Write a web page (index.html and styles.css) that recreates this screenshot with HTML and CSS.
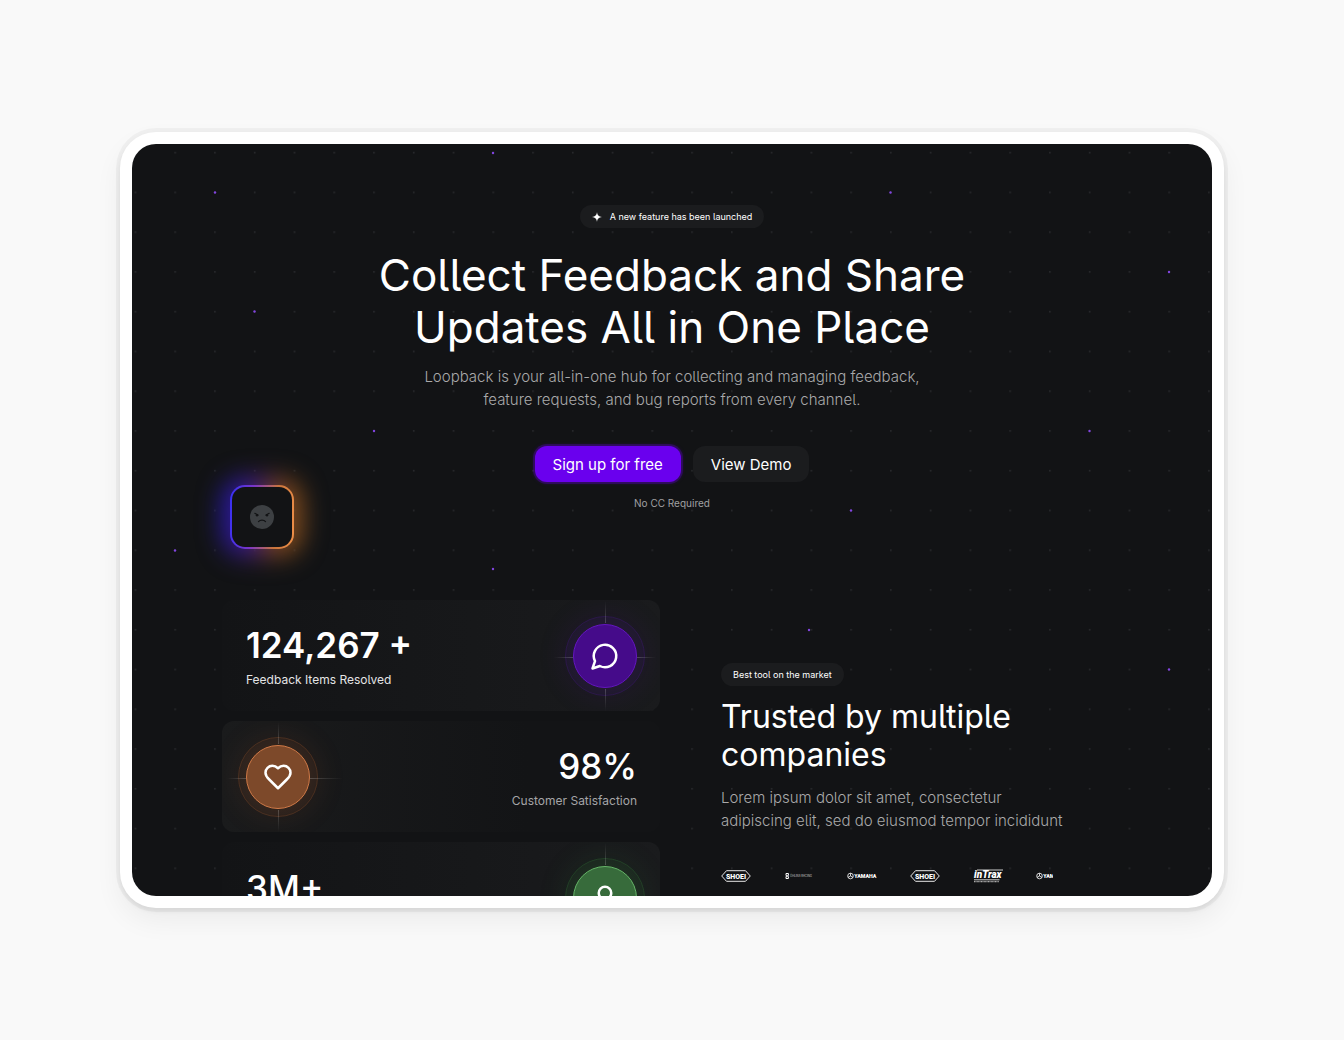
FILE: index.html
```html
<!DOCTYPE html>
<html lang="en">
<head>
<meta charset="utf-8">
<meta name="viewport" content="width=device-width, initial-scale=1">
<title>Loopback</title>
<link rel="stylesheet" href="styles.css">
</head>
<body>
<div class="frame">
<main class="screen">
  <svg class="dots" aria-hidden="true">
    <defs>
      <pattern id="grid" x="2.6" y="7.8" width="39.76" height="39.76" patternUnits="userSpaceOnUse">
        <rect width="1.6" height="1.6" fill="#292a2d"/>
      </pattern>
    </defs>
    <rect width="100%" height="100%" fill="url(#grid)"/>
    <g fill="#8245e0">
      <circle cx="361" cy="9" r="1.2"/><circle cx="83" cy="48.500" r="1.200"/><circle cx="758.500" cy="48.500" r="1.200"/>
      <circle cx="1037" cy="128" r="1.200"/><circle cx="122.500" cy="167.500" r="1.200"/><circle cx="242" cy="287" r="1.200"/>
      <circle cx="957.500" cy="287" r="1.200"/><circle cx="719" cy="366.500" r="1.200"/><circle cx="43" cy="406.500" r="1.200"/>
      <circle cx="361" cy="425" r="1.200"/><circle cx="677" cy="486" r="1.200"/><circle cx="1037" cy="525.500" r="1.200"/>
    </g>
  </svg>

  <section class="hero">
    <p class="pill">
      <svg class="spark" viewBox="0 0 10 10" aria-hidden="true"><path d="M5 0C5.400 3.300 6.700 4.600 10 5 6.700 5.400 5.400 6.700 5 10 4.600 6.700 3.300 5.400 0 5 3.300 4.600 4.600 3.300 5 0Z" fill="#fff"/></svg>
      A new feature has been launched
    </p>
    <h1 class="hero-title">Collect Feedback and Share<br>Updates All in One Place</h1>
    <p class="lead">Loopback is your all-in-one hub for collecting and managing feedback,<br>feature requests, and bug reports from every channel.</p>
    <div class="actions">
      <button class="btn btn-primary" type="button">Sign up for free</button>
      <button class="btn btn-ghost" type="button">View Demo</button>
    </div>
    <p class="note">No CC Required</p>
    <div class="mood">
      <div class="mood-face">
        <svg viewBox="0 0 24 24" aria-hidden="true">
          <circle cx="12" cy="12" r="12" fill="#3d4043"/>
          <g stroke="#121315" stroke-width="1.200" stroke-linecap="round" fill="none"><path d="M4.800 8.300 8 10M19.200 8.300 16 10M8.500 16.600c1.500-2 5.500-2 7 0"/></g>
          <circle cx="7" cy="10.300" r="1.200" fill="#121315"/><circle cx="17" cy="10.300" r="1.200" fill="#121315"/>
        </svg>
      </div>
    </div>
  </section>

  <section class="proof">
    <div class="stats">
      <article class="stat violet">
        <div class="stat-text"><p class="num">124,267 +</p><p class="label bright">Feedback Items Resolved</p></div>
        <div class="orb"><svg viewBox="0 0 24 24" aria-hidden="true"><path d="M7.900 20A9 9 0 1 0 4 16.100L2 22Z"/></svg></div>
      </article>
      <article class="stat flip orange">
        <div class="stat-text"><p class="num medium">98%</p><p class="label">Customer Satisfaction</p></div>
        <div class="orb"><svg viewBox="0 0 24 24" aria-hidden="true"><path d="M19 14c1.490-1.460 3-3.210 3-5.500A5.500 5.500 0 0 0 16.500 3c-1.760 0-3 .5-4.500 2-1.500-1.500-2.740-2-4.500-2A5.500 5.500 0 0 0 2 8.500c0 2.300 1.500 4.050 3 5.500l7 7Z"/></svg></div>
      </article>
      <article class="stat green">
        <div class="stat-text"><p class="num medium">3M+</p></div>
        <div class="orb"><svg viewBox="0 0 24 24" aria-hidden="true"><circle cx="12" cy="8" r="5"/><path d="M20 21a8 8 0 0 0-16 0"/></svg></div>
      </article>
    </div>

    <div class="trust">
      <p class="pill">Best tool on the market</p>
      <h2 class="trust-title">Trusted by multiple companies</h2>
      <p class="trust-copy">Lorem ipsum dolor sit amet, consectetur adipiscing elit, sed do eiusmod tempor incididunt</p>
      <div class="logos">
        <svg viewBox="0 0 30 14" role="img" aria-label="Shoei"><path d="M5.500 1.700h19L29.300 7l-4.800 5.300h-19L.7 7Z" fill="none" stroke="#fff" stroke-width=".9"/><text class="mark" x="15" y="9.600" font-size="7" text-anchor="middle">SHOEI</text></svg>
        <svg viewBox="0 0 30 14" role="img" aria-label="Racing"><path d="M2 4.500h2.400v2L3.200 7l1.200.5v2H2v-2L3.200 7 2 6.500Z" fill="none" stroke="#fff"/><text class="fine" x="6" y="8" font-size="2.800">ÖHLINS RACING</text></svg>
        <svg viewBox="0 0 30 14" role="img" aria-label="Yamaha"><circle cx="3.500" cy="7" r="2.800" fill="none" stroke="#fff" stroke-width=".8"/><path d="M3.500 7V4.200M3.500 7l-2.400 1.400M3.500 7l2.400 1.400" stroke="#fff" stroke-width=".8"/><text class="mark" x="7.200" y="9" font-size="5.300">YAMAHA</text></svg>
        <svg viewBox="0 0 30 14" role="img" aria-label="Shoei"><path d="M5.500 1.700h19L29.300 7l-4.800 5.300h-19L.7 7Z" fill="none" stroke="#fff" stroke-width=".9"/><text class="mark" x="15" y="9.600" font-size="7" text-anchor="middle">SHOEI</text></svg>
        <svg viewBox="0 0 30 14" role="img" aria-label="Intrax"><path d="M4 1h26M1 10.800h25.500" stroke="#fff" stroke-width=".8"/><path d="M1 12.700h25" stroke="#aaa" stroke-width="1.200" stroke-dasharray="1 .4"/><text class="mark slant" x="1" y="9.400" font-size="10">inTrax</text></svg>
        <svg viewBox="0 0 30 14" role="img" aria-label="Yamaha"><circle cx="3.500" cy="7" r="2.800" fill="none" stroke="#fff" stroke-width=".8"/><path d="M3.500 7V4.200M3.500 7l-2.400 1.400M3.500 7l2.400 1.400" stroke="#fff" stroke-width=".8"/><text class="mark" x="7.200" y="9" font-size="5.300">YAMAHA</text></svg>
      </div>
    </div>
  </section>
</main>
</div>
</body>
</html>
```
FILE: styles.css
```css
* { box-sizing: border-box; margin: 0; }

body {
  height: 100vh;
  padding: 132px 120px;
  display: flex;
  background: #f9f9f9;
  color: #fff;
  font-family: Inter, "Liberation Sans", sans-serif;
  font-feature-settings: "cv05";
}

.frame {
  flex: 1;
  min-width: 0;
  padding: 12px;
  display: flex;
  border-radius: 36px;
  background: #fff;
  box-shadow: 0 0 0 4px rgba(0, 0, 0, .035), 0 3px 5px rgba(0, 0, 0, .06), 0 12px 28px rgba(0, 0, 0, .06);
}

.screen {
  position: relative;
  flex: 1;
  min-width: 0;
  overflow: hidden;
  border-radius: 24px;
  background: #121315;
}

.dots {
  position: absolute;
  inset: 0;
  width: 100%;
  height: 100%;
}

.hero {
  position: relative;
  z-index: 0;
  padding: 61px 90px 0;
  display: flex;
  flex-direction: column;
  align-items: center;
  text-align: center;
}

.pill {
  height: 23px;
  padding: 0 12px;
  display: inline-flex;
  align-items: center;
  gap: 8px;
  border-radius: 12px;
  background: #1b1c1e;
  font-size: 9px;
  white-space: nowrap;
}

.spark { width: 10px; height: 10px; }

.hero-title {
  margin-top: 21px;
  font-size: 44px;
  line-height: 52px;
  font-weight: 400;
}

.lead {
  margin-top: 12px;
  color: #a9a9aa;
  font-size: 15px;
  line-height: 23px;
  font-weight: 300;
}

.actions {
  margin-top: 35px;
  display: flex;
  gap: 12px;
}

.btn {
  height: 36px;
  padding: 0 18px;
  border: 0;
  border-radius: 12px;
  color: #fff;
  font: inherit;
  font-size: 15px;
}

.btn-primary {
  background: #6a00ee;
  box-shadow: 0 0 0 2px rgba(106, 0, 238, .25), 0 0 5px rgba(106, 0, 238, .3);
}

.btn-ghost { background: #1b1c1e; }

.note {
  margin-top: 13px;
  color: #a0a0a2;
  font-size: 10px;
  line-height: 16px;
}

/* floating reaction tile with a two-tone glow */
.mood {
  position: absolute;
  left: 98px;
  top: 341px;
  width: 64px;
  height: 64px;
  padding: 2px;
  border-radius: 15px;
  background: linear-gradient(95deg, #3530f5, #7a35c8 35%, #c8743c 70%, #f09048);
}

.mood::before {
  content: "";
  position: absolute;
  z-index: -1;
  inset: -8px;
  border-radius: 24px;
  background: linear-gradient(95deg, #1c18b8, #401a78 40%, #804818 70%, #905824);
  filter: blur(12px);
}

.mood-face {
  width: 100%;
  height: 100%;
  display: grid;
  place-items: center;
  border-radius: 13px;
  background: #121315;
}

.mood-face svg { width: 24px; height: 24px; }

.proof {
  position: relative;
  padding: 0 147px 0 90px;
  margin-top: 89px;
  display: grid;
  grid-template-columns: minmax(0, 438fr) minmax(0, 344fr);
  gap: 61px;
  align-items: center;
}

.stats {
  display: grid;
  gap: 10px;
}

.stat {
  position: relative;
  z-index: 0;
  height: 111px;
  padding: 0 23px 0 24px;
  display: flex;
  align-items: center;
  justify-content: space-between;
  overflow: hidden;
  border-radius: 12px;
  background: linear-gradient(90deg, #131416, #1a1b1d);
}

.flip {
  flex-direction: row-reverse;
  background: linear-gradient(90deg, #1a1b1c, #131416 70%);
  text-align: right;
}

.green { align-items: flex-start; padding-top: 24px; }

.num {
  font-size: 35px;
  line-height: 44px;
  font-weight: 600;
}

.medium { font-weight: 500; }

.label {
  margin-top: 4px;
  color: #a5a5a7;
  font-size: 12px;
  line-height: 18px;
}

.bright { color: #e4e4e5; }

.violet { --fill: #450b8a; --edge: #6316c0; --glow: 90, 20, 180; }
.orange { --fill: #7d492a; --edge: #d07a48; --glow: 190, 100, 50; }
.green { --fill: #376b3b; --edge: #66b569; --glow: 60, 150, 70; }

.orb {
  position: relative;
  width: 64px;
  height: 64px;
  flex: none;
  display: grid;
  place-items: center;
  border: 1px solid var(--edge);
  border-radius: 50%;
  background: var(--fill);
  box-shadow: 0 0 0 8px rgba(var(--glow), .08), 0 0 32px 6px rgba(var(--glow), .14);
}

.orb svg {
  width: 30px;
  height: 30px;
  fill: none;
  stroke: #fff;
  stroke-width: 2;
  stroke-linecap: round;
  stroke-linejoin: round;
  outline: 1px solid rgba(var(--glow), .2);
  outline-offset: 24px;
  border-radius: 50%;
  overflow: visible;
}

.orb::before,
.orb::after {
  content: "";
  position: absolute;
}

.orb::before {
  left: 31px;
  top: -24px;
  bottom: -24px;
  width: 1px;
  background: linear-gradient(transparent, rgba(255, 255, 255, .2) 20%, transparent 20%, transparent 80%, rgba(255, 255, 255, .2) 80%, transparent);
}

.orb::after {
  top: 32px;
  left: -20px;
  right: -20px;
  height: 1px;
  background: linear-gradient(90deg, transparent, rgba(255, 255, 255, .2) 19px, transparent 19px, transparent 83px, rgba(255, 255, 255, .2) 83px, transparent);
}

.flip .orb::after { right: -34px; }

.trust-title {
  margin-top: 12px;
  max-width: 332px;
  font-size: 32px;
  line-height: 38px;
  font-weight: 400;
}

.trust-copy {
  margin-top: 12px;
  color: #a9a9aa;
  font-size: 15px;
  line-height: 23px;
  font-weight: 300;
}

.logos {
  margin-top: 28px;
  max-width: 332px;
  height: 32px;
  display: flex;
  align-items: center;
  gap: 33px;
  overflow: hidden;
}

.logos svg {
  flex: none;
  width: 30px;
  height: 14px;
}

.mark {
  fill: #fff;
  font-family: Roboto, "Liberation Sans", sans-serif;
  font-weight: 900;
}

.slant { font-style: italic; }

.fine { fill: #ccc; }
```
